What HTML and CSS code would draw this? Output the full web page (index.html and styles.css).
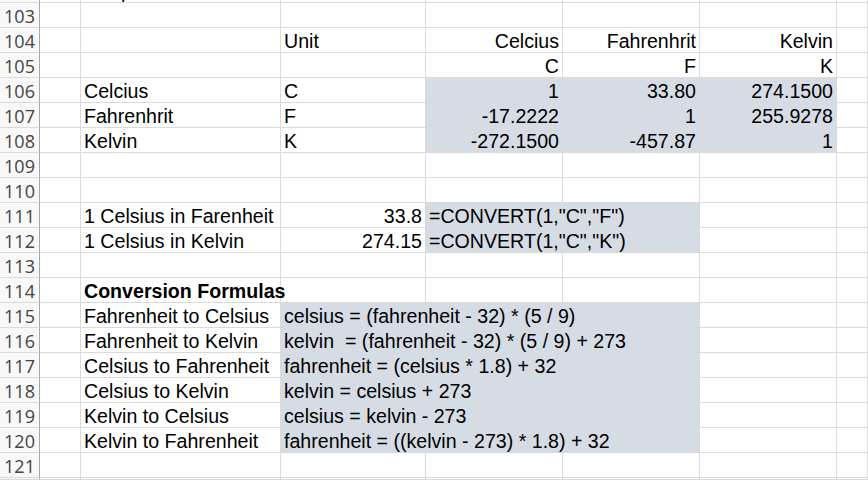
FILE: index.html
```html
<!DOCTYPE html>
<html>
<head>
<meta charset="utf-8">
<link rel="stylesheet" href="styles.css">
</head>
<body>
<div class="sheet">
  <div class="row top">
    <div class="c h"></div><div class="c"></div><div class="c">Temperature</div><div class="c"></div><div class="c"></div><div class="c"></div><div class="c"></div><div class="c"></div>
  </div>
  <div class="row">
    <div class="c h">103</div><div class="c"></div><div class="c"></div><div class="c"></div><div class="c"></div><div class="c"></div><div class="c"></div><div class="c"></div>
  </div>
  <div class="row">
    <div class="c h">104</div><div class="c"></div><div class="c"></div><div class="c">Unit</div><div class="c r">Celcius</div><div class="c r">Fahrenhrit</div><div class="c r">Kelvin</div><div class="c"></div>
  </div>
  <div class="row">
    <div class="c h">105</div><div class="c"></div><div class="c"></div><div class="c"></div><div class="c r">C</div><div class="c r">F</div><div class="c r">K</div><div class="c"></div>
  </div>
  <div class="row">
    <div class="c h">106</div><div class="c"></div><div class="c">Celcius</div><div class="c">C</div><div class="c r f nr nb">1</div><div class="c r f nr nb">33.80</div><div class="c r f nb">274.1500</div><div class="c"></div>
  </div>
  <div class="row">
    <div class="c h">107</div><div class="c"></div><div class="c">Fahrenhrit</div><div class="c">F</div><div class="c r f nr nb">-17.2222</div><div class="c r f nr nb">1</div><div class="c r f nb">255.9278</div><div class="c"></div>
  </div>
  <div class="row">
    <div class="c h">108</div><div class="c"></div><div class="c">Kelvin</div><div class="c">K</div><div class="c r f nr">-272.1500</div><div class="c r f nr">-457.87</div><div class="c r f">1</div><div class="c"></div>
  </div>
  <div class="row">
    <div class="c h">109</div><div class="c"></div><div class="c"></div><div class="c"></div><div class="c"></div><div class="c"></div><div class="c"></div><div class="c"></div>
  </div>
  <div class="row">
    <div class="c h">110</div><div class="c"></div><div class="c"></div><div class="c"></div><div class="c"></div><div class="c"></div><div class="c"></div><div class="c"></div>
  </div>
  <div class="row">
    <div class="c h">111</div><div class="c"></div><div class="c">1 Celsius in Farenheit</div><div class="c r">33.8</div><div class="c f nb span2">=CONVERT(1,"C","F")</div><div class="c"></div><div class="c"></div>
  </div>
  <div class="row">
    <div class="c h">112</div><div class="c"></div><div class="c">1 Celsius in Kelvin</div><div class="c r">274.15</div><div class="c f span2">=CONVERT(1,"C","K")</div><div class="c"></div><div class="c"></div>
  </div>
  <div class="row">
    <div class="c h">113</div><div class="c"></div><div class="c"></div><div class="c"></div><div class="c"></div><div class="c"></div><div class="c"></div><div class="c"></div>
  </div>
  <div class="row">
    <div class="c h">114</div><div class="c"></div><div class="c b">Conversion Formulas</div><div class="c"></div><div class="c"></div><div class="c"></div><div class="c"></div><div class="c"></div>
  </div>
  <div class="row">
    <div class="c h">115</div><div class="c"></div><div class="c">Fahrenheit to Celsius</div><div class="c f nb span3">celsius = (fahrenheit - 32) * (5 / 9)</div><div class="c"></div><div class="c"></div>
  </div>
  <div class="row">
    <div class="c h">116</div><div class="c"></div><div class="c">Fahrenheit to Kelvin</div><div class="c f nb span3">kelvin  = (fahrenheit - 32) * (5 / 9) + 273</div><div class="c"></div><div class="c"></div>
  </div>
  <div class="row">
    <div class="c h">117</div><div class="c"></div><div class="c">Celsius to Fahrenheit</div><div class="c f nb span3">fahrenheit = (celsius * 1.8) + 32</div><div class="c"></div><div class="c"></div>
  </div>
  <div class="row">
    <div class="c h">118</div><div class="c"></div><div class="c">Celsius to Kelvin</div><div class="c f nb span3">kelvin = celsius + 273</div><div class="c"></div><div class="c"></div>
  </div>
  <div class="row">
    <div class="c h">119</div><div class="c"></div><div class="c">Kelvin to Celsius</div><div class="c f nb span3">celsius = kelvin - 273</div><div class="c"></div><div class="c"></div>
  </div>
  <div class="row">
    <div class="c h">120</div><div class="c"></div><div class="c">Kelvin to Fahrenheit</div><div class="c f span3">fahrenheit = ((kelvin - 273) * 1.8) + 32</div><div class="c"></div><div class="c"></div>
  </div>
  <div class="row">
    <div class="c h">121</div><div class="c"></div><div class="c"></div><div class="c"></div><div class="c"></div><div class="c"></div><div class="c"></div><div class="c"></div>
  </div>
  <div class="row bottom">
    <div class="c h"></div><div class="c"></div><div class="c"></div><div class="c"></div><div class="c"></div><div class="c"></div><div class="c"></div><div class="c"></div>
  </div>
</div>
</body>
</html>
```

FILE: styles.css
```css
* { box-sizing: border-box; }
html, body { margin: 0; padding: 0; background: #ffffff; }
body { width: 868px; height: 480px; overflow: hidden; }

.sheet {
  display: flex;
  flex-direction: column;
  font-family: "Liberation Sans", Arial, sans-serif;
  font-size: 19.6px;
  color: #000;
}

.row {
  display: grid;
  grid-template-columns: 40px 41px 200px 145px 137px 137px 137px 1fr;
  height: 25px;
  overflow: hidden;
}
.row.top { height: 3px; }
.row.bottom { height: 2px; }

.c {
  display: flex;
  align-items: flex-end;
  justify-content: flex-start;
  line-height: 22px;
  padding: 0 3px;
  border-right: 1px solid #dadada;
  border-bottom: 1px solid #dadada;
  white-space: pre;
  overflow: hidden;
  min-width: 0;
}

.h {
  justify-content: center;
  padding: 0;
  background: #f8f8f8;
  border-right-color: #a6a6a6;
  font-family: "Open Sans", "Liberation Sans", sans-serif;
  font-size: 18px;
  color: #444444;
}

.r { justify-content: flex-end; }
.b { font-weight: bold; overflow: visible; position: relative; z-index: 1; }

.f { background: #d6dce4; }
.f.nr { border-right-color: #d6dce4; }
.f.nb { border-bottom-color: #d6dce4; }

.span2 { grid-column: span 2; }
.span3 { grid-column: span 3; }
```
